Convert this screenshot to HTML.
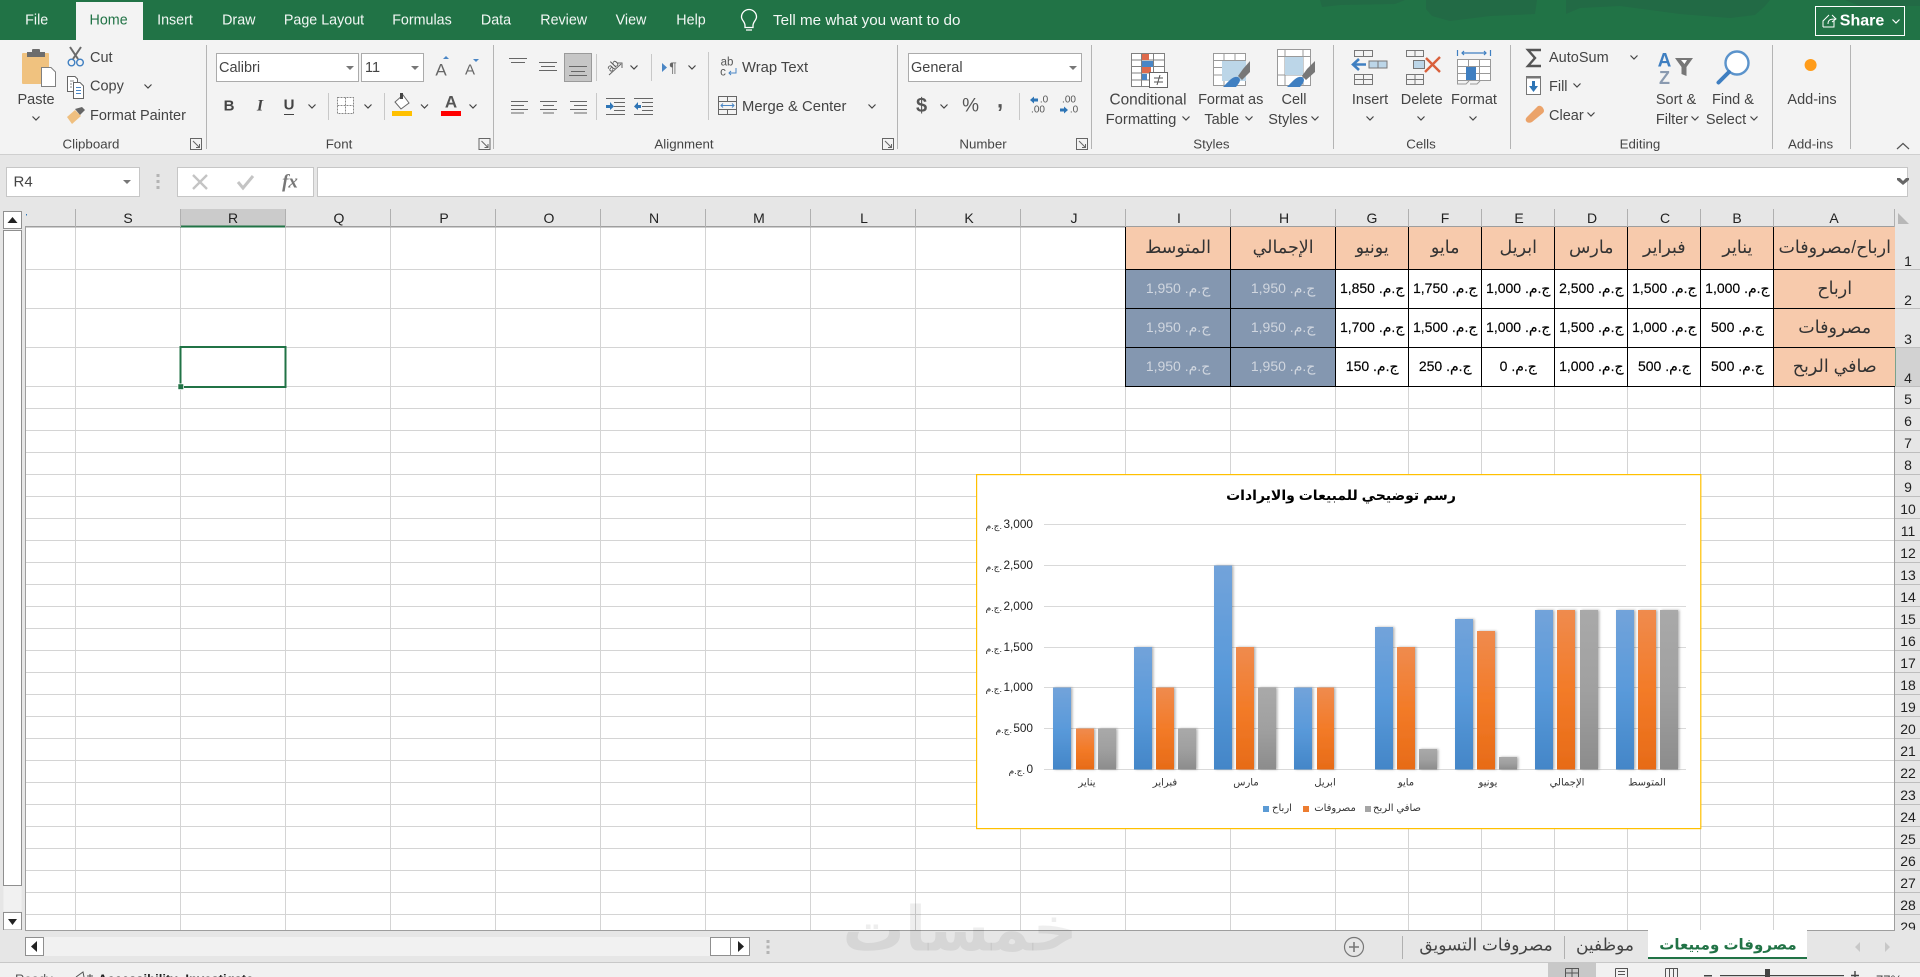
<!DOCTYPE html>
<html lang="en"><head><meta charset="utf-8"><title>Excel</title>
<style>
html,body{margin:0;padding:0;width:1920px;height:977px;overflow:hidden;background:#fff}
svg{position:absolute;left:0;top:0;display:block}
text{font-family:"Liberation Sans","DejaVu Sans",sans-serif;dominant-baseline:central;fill:#444;font-size:14.5px}
.m{text-anchor:middle}
.w text{fill:#f2f7f4;font-size:14.3px}
.c text{fill:#222;font-size:14px;text-anchor:middle}
.g text{fill:#444;font-size:13.3px;text-anchor:middle}
.ln{fill:none;stroke:#666;stroke-width:1}
.ch{fill:none;stroke:#444;stroke-width:1.2}
.cat text{font-size:10px;fill:#333;text-anchor:middle}
table{position:absolute;left:1125px;top:227px;border-collapse:collapse;table-layout:fixed;width:770px;font-family:"Liberation Sans","DejaVu Sans",sans-serif}
td{border:1px solid #000;padding:0;text-align:center;white-space:nowrap;overflow:hidden;font-size:14px;color:#000;background:#fff;vertical-align:middle;-webkit-text-stroke:.15px #000}
tr.h td,td.a{background:#f7caac;font-size:17.5px;color:#333;-webkit-text-stroke:0}
tr.h td{border-top:0}
td:last-child{border-right:0}
td.b{background:#8497b0;color:#d0d6df;-webkit-text-stroke:0}
</style></head><body>
<svg width="1920" height="977" viewBox="0 0 1920 977" xmlns="http://www.w3.org/2000/svg" shape-rendering="geometricPrecision">
<defs>
<path id="chv" class="ch" d="M-3.5-1.5 0 2 3.5-1.5"/>
<path id="tri" fill="#777" d="M-4-2H4L0 2Z"/>
<path id="launch" fill="none" stroke="#666" d="M-5.5-5.5H5.5V5.5H-5.5ZM-3-3 3.5 3.5M3.5 0V3.5H0"/>
</defs>
<!-- backgrounds -->
<rect width="1920" height="977" fill="#fff"/>
<rect width="1920" height="40" fill="#217346"/>
<path fill="#226a45" d="M1320 0H1405L1395 4 1340 5 1322 7ZM1426 0H1537L1535 14 1490 16 1450 21 1432 16 1426 9ZM1566 14 1580 8 1620 6 1680 14 1730 18 1755 15 1765 6 1770 0H1568L1566 0ZM1845 0H1920V6H1860Z"/>
<rect x="76" y="2" width="67" height="38" fill="#f3f3f3"/>
<rect y="40" width="1920" height="114" fill="#f3f3f3"/>
<rect y="154" width="1920" height="1" fill="#cfcfcf"/>
<rect y="155" width="1920" height="72" fill="#e6e6e6"/>
<!-- title tabs -->
<g class="w">
<text x="36.7" y="20.5" class="m">File</text>
<text x="108.6" y="20.5" class="m" style="fill:#217346">Home</text>
<text x="175" y="20.5" class="m">Insert</text>
<text x="238.8" y="20.5" class="m">Draw</text>
<text x="324" y="20.5" class="m">Page Layout</text>
<text x="422" y="20.5" class="m">Formulas</text>
<text x="496" y="20.5" class="m">Data</text>
<text x="563.7" y="20.5" class="m">Review</text>
<text x="631" y="20.5" class="m">View</text>
<text x="691" y="20.5" class="m">Help</text>
<text x="773" y="20.5" style="font-size:15.2px">Tell me what you want to do</text>
</g>
<path fill="none" stroke="#fff" stroke-width="1.3" d="M745 27.5V25.5C745 22 741.5 20 741.5 17A7.5 7.5 0 0 1 756.5 17C756.5 20 753 22 753 25.5V27.5ZM746 30H752"/>
<rect x="1815.5" y="6.5" width="89" height="29" fill="none" stroke="#fff"/>
<text x="1862" y="21" class="m" style="fill:#fff;font-weight:bold;font-size:16px">Share</text>
<path fill="none" stroke="#fff" d="M1823 27V21L1829 15M1823 27H1834V21M1828 24C1828 20 1830 19 1835 19M1832 15L1836 19 1832 22"/>
<path fill="none" stroke="#fff" stroke-width="1.2" d="M1892.5 19.5 1896 23 1899.5 19.5"/>
<!-- group separators -->
<g fill="#b4b4b4">
<rect x="206" y="45" width="1" height="104"/><rect x="493" y="45" width="1" height="104"/><rect x="897" y="45" width="1" height="104"/><rect x="1091" y="45" width="1" height="104"/><rect x="1333" y="45" width="1" height="104"/><rect x="1510" y="45" width="1" height="104"/><rect x="1772" y="45" width="1" height="104"/><rect x="1850" y="45" width="1" height="104"/>
<rect x="328" y="93" width="1" height="27" fill="#c8c8c8"/><rect x="384" y="93" width="1" height="27" fill="#c8c8c8"/>
<rect x="596" y="54" width="1" height="27" fill="#c8c8c8"/><rect x="596" y="93" width="1" height="27" fill="#c8c8c8"/>
<rect x="651" y="54" width="1" height="27" fill="#c8c8c8"/><rect x="708" y="52" width="1" height="68" fill="#c8c8c8"/>
<rect x="1019" y="93" width="1" height="27" fill="#c8c8c8"/>
</g>
<g class="g">
<text x="91" y="144">Clipboard</text><text x="339" y="144">Font</text><text x="684" y="144">Alignment</text><text x="983" y="144">Number</text><text x="1211.4" y="144">Styles</text><text x="1421" y="144">Cells</text><text x="1640" y="144">Editing</text><text x="1810.6" y="144">Add-ins</text>
</g>
<use href="#launch" x="196" y="144"/><use href="#launch" x="484.5" y="144"/><use href="#launch" x="888" y="144"/><use href="#launch" x="1082" y="144"/>
<path fill="none" stroke="#555" stroke-width="1.2" d="M1897 149 1903 143.5 1909 149"/>
<!-- clipboard -->
<rect x="22" y="53" width="27" height="31" rx="1" fill="#f0c27f"/>
<path fill="#6d6d6d" d="M27 52H32V50Q32 49 33 49H39Q40 49 40 50V52H45V57H27Z"/>
<path fill="#fff" stroke="#808080" d="M41.5 67.5H51L55.5 72V86.5H41.5Z"/>
<text x="36" y="100" class="m">Paste</text><use href="#chv" x="36" y="118"/>
<g fill="none"><circle cx="71.5" cy="62.5" r="3.3" stroke="#3f7fc1" stroke-width="1.4"/><circle cx="80" cy="62.5" r="3.3" stroke="#3f7fc1" stroke-width="1.4"/><path stroke="#6a6a6a" stroke-width="2" d="M73 59 81 47M78 59 70 47"/></g>
<text x="90" y="58">Cut</text>
<path fill="#fff" stroke="#666" d="M67.5 76.5H75L77.5 79V91.5H67.5Z"/><path fill="#fff" stroke="#666" d="M73.5 82.5H80L83.5 86V98.5H73.5Z"/>
<path stroke="#4a86c5" d="M76 87.5H81M76 90.5H81M76 93.5H81"/><path stroke="#888" d="M70 81H74M70 84H72M70 87H72"/>
<text x="90" y="86.7">Copy</text><use href="#chv" x="148" y="86"/>
<path fill="#efbf7f" d="M67 117 75 110 81 116 72 124Z"/><path fill="#666" d="M75 109 82 107 85 110 80 115Z"/>
<text x="90" y="116">Format Painter</text>
<!-- font -->
<rect x="216.5" y="53.5" width="142" height="28" fill="#fff" stroke="#ababab"/>
<rect x="361.5" y="53.5" width="62" height="28" fill="#fff" stroke="#ababab"/>
<text x="219" y="68">Calibri</text><text x="365" y="68">11</text>
<use href="#tri" x="350" y="68"/><use href="#tri" x="415" y="68"/>
<text x="441" y="70" class="m" style="font-size:17px;fill:#666">A</text><path fill="#4a86c5" d="M443 59H449L446 56Z"/>
<text x="470" y="70" class="m" style="font-size:15px;fill:#666">A</text><path fill="#4a86c5" d="M473 59H479L476 62Z"/>
<text x="229" y="106" class="m" style="font-weight:bold;font-size:15px;fill:#444">B</text>
<text x="260" y="106" class="m" style="font-style:italic;font-family:'Liberation Serif',serif;font-weight:bold;font-size:16px;fill:#444">I</text>
<text x="289" y="105" class="m" style="font-weight:bold;font-size:15px;fill:#444">U</text><rect x="284" y="114" width="10" height="1" fill="#444"/>
<use href="#chv" x="312" y="106"/>
<path fill="#fff" stroke="#888" stroke-dasharray="2 1" d="M337.5 97.5H353.5V113.5H337.5ZM345.5 97.5V113.5M337.5 105.5H353.5"/>
<use href="#chv" x="368" y="106"/>
<path fill="#fff" stroke="#666" d="M403 95 409 103 401 109 395 102Z"/><path fill="#444" d="M400 93H403V99H400Z"/><rect x="392" y="111" width="20" height="5" fill="#ffc000"/>
<use href="#chv" x="424.5" y="106"/>
<text x="451" y="102" class="m" style="font-size:17px;font-weight:bold;fill:#555">A</text><rect x="441" y="111" width="20" height="5" fill="#f00"/>
<use href="#chv" x="473" y="106"/>
<!-- alignment -->
<rect x="564.5" y="53.5" width="27" height="28" fill="#c6c6c6" stroke="#9a9a9a"/>
<path class="ln" d="M509 58.5H527M511 62.5H525M539 62.5H557M541 66.5H555M539 70.5H557M569 66.5H587M571 71.5H585M569 75.5H587"/>
<path class="ln" d="M511 101.5H528M511 105.5H524M511 109.5H528M511 113H524M540 101.5H557M543 105.5H554M540 109.5H557M543 113H554M570 101.5H587M574 105.5H587M570 109.5H587M574 113H587"/>
<text x="613" y="66" class="m" transform="rotate(-45 613 66)" style="font-size:11px;fill:#555">ab</text><path fill="none" stroke="#666" d="M609 75 621 64M617 63H622V68"/>
<use href="#chv" x="634" y="67"/>
<path fill="#4a86c5" d="M662 63V72L667 67.5Z"/><text x="673" y="67" class="m" style="font-size:14px;fill:#666">¶</text><use href="#chv" x="692" y="67"/>
<text x="727" y="62.5" class="m" style="font-size:11.5px;fill:#555">ab</text><text x="723" y="72.5" class="m" style="font-size:11.5px;fill:#555">c</text><path fill="none" stroke="#4a86c5" d="M736 68V73H729M731 71 729 73 731 75"/>
<text x="742" y="68" style="font-size:14.8px">Wrap Text</text>
<path class="ln" d="M718.5 96.5H736.5V114.5H718.5ZM718.5 101.5H736.5M718.5 109.5H736.5M727.5 96.5V101.5M727.5 109.5V114.5"/><path fill="none" stroke="#4a86c5" d="M721 105.5H734M723 103.5 721 105.5 723 107.5M732 103.5 734 105.5 732 107.5"/>
<text x="742" y="107" style="font-size:14.8px">Merge &amp; Center</text><use href="#chv" x="872" y="106"/>
<path class="ln" d="M606 98.5H625M614 102.5H625M614 106.5H625M614 110.5H625M606 114.5H625"/><path fill="#2e75b6" d="M606 105H610V102L614 106.5 610 110V108H606Z"/>
<path class="ln" d="M634 98.5H653M642 102.5H653M642 106.5H653M642 110.5H653M634 114.5H653"/><path fill="#2e75b6" d="M641 105H638V102L634 106.5 638 110V108H641Z"/>
<!-- number -->
<rect x="908.5" y="53.5" width="173" height="28" fill="#fff" stroke="#ababab"/>
<text x="911" y="68">General</text><use href="#tri" x="1073" y="68"/>
<text x="921.6" y="106" class="m" style="font-size:20px;font-weight:bold;fill:#555">$</text><use href="#chv" x="944" y="106"/>
<text x="970.6" y="106" class="m" style="font-size:19px;fill:#555">%</text>
<text x="1000" y="100" class="m" style="font-size:22px;font-weight:bold;fill:#555">,</text>
<text x="1044" y="100" class="m" style="font-size:10px;fill:#555">.0</text><text x="1038" y="110" class="m" style="font-size:10px;fill:#555">.00</text><path fill="#2e75b6" d="M1030 100 1034 96.5V98.5H1038V101.5H1034V103.5Z"/>
<text x="1069" y="100" class="m" style="font-size:10px;fill:#555">.00</text><text x="1074" y="110" class="m" style="font-size:10px;fill:#555">.0</text><path fill="#2e75b6" d="M1060 108.5H1064V106.5L1068 110 1064 113.5V111.5H1060Z"/>
<!-- styles -->
<path fill="#fff" stroke="#808080" d="M1131.5 53.5H1164.5V86.5H1131.5ZM1131.5 60H1164.5M1131.5 66.5H1164.5M1131.5 73H1164.5M1131.5 80H1164.5M1141.5 53.5V86.5M1153.5 53.5V86.5"/>
<rect x="1142" y="54" width="7" height="6" fill="#de6a4b"/><rect x="1142" y="61" width="11" height="6" fill="#4a86c5"/><rect x="1142" y="67" width="9" height="6" fill="#de6a4b"/><rect x="1142" y="74" width="5" height="6" fill="#4a86c5"/>
<rect x="1149.5" y="72.5" width="18" height="15" fill="#fff" stroke="#666"/><path stroke="#555" fill="none" d="M1154 78H1163M1154 82H1163M1157 85 1160 75"/>
<g fill="#fff" stroke="#999"><path d="M1213.5 53.5H1245.5V85.5H1213.5Z"/><path fill="none" d="M1213.5 60.5H1245.5M1213.5 67.5H1245.5M1213.5 75H1245.5M1224 53.5V85.5M1235 53.5V85.5"/></g>
<rect x="1222" y="61" width="24" height="20" fill="#bcd6e8"/>
<path fill="#777" d="M1243 69 1250 61V72L1242 80 1238 76Z"/><path fill="#3f7fc1" d="M1223 87C1227 83 1231 78 1235 77 1240 76 1241 80 1239 83L1236 87Z"/>
<g fill="#fff" stroke="#999"><path d="M1277.5 49.5H1310.5V85.5H1277.5Z"/><path fill="none" d="M1277.5 56.5H1310.5M1277.5 75H1310.5M1285 49.5V85.5M1303 49.5V85.5"/></g>
<rect x="1285" y="57" width="18" height="18" fill="#bcd6e8"/>
<path fill="#777" d="M1307 69 1315 61V72L1306 80 1302 76Z"/><path fill="#3f7fc1" d="M1287 87C1291 83 1295 78 1299 77 1304 76 1305 80 1303 83L1300 87Z"/>
<text x="1148" y="100" class="m" style="font-size:15.4px">Conditional</text><text x="1141" y="120" class="m" style="font-size:14.8px">Formatting</text><use href="#chv" x="1186" y="118"/>
<text x="1230.7" y="100" class="m">Format as</text><text x="1221.7" y="120" class="m">Table</text><use href="#chv" x="1249" y="118"/>
<text x="1294" y="100" class="m">Cell</text><text x="1288" y="120" class="m">Styles</text><use href="#chv" x="1315" y="118"/>
<!-- cells -->
<path class="ln" style="stroke:#777" d="M1354.5 50.5H1372.5V56.5H1354.5ZM1363.5 50.5V56.5M1354.5 74.5H1372.5V84.5H1354.5ZM1354.5 79.5H1372.5M1363.5 74.5V84.5"/>
<rect x="1369" y="61" width="18" height="7" fill="#bcd6e8" stroke="#777"/><path stroke="#777" d="M1378 61V68"/>
<path fill="none" stroke="#3f7fc1" stroke-width="2.6" d="M1366 64.5H1353M1359 59 1353 64.5 1359 70"/>
<text x="1370" y="100" class="m">Insert</text><use href="#chv" x="1370" y="118"/>
<path class="ln" style="stroke:#777" d="M1406.5 50.5H1423.5V56.5H1406.5ZM1415 50.5V56.5M1406.5 74.5H1423.5V84.5H1406.5ZM1406.5 79.5H1423.5M1415 74.5V84.5"/>
<rect x="1413.5" y="60.5" width="11" height="8" fill="#bcd6e8" stroke="#777"/>
<path stroke="#d9603c" stroke-width="2.4" fill="none" d="M1426 58 1440 72M1440 57 1425 72"/>
<text x="1421.7" y="100" class="m">Delete</text><use href="#chv" x="1421" y="118"/>
<path fill="none" stroke="#3f7fc1" stroke-width="1.2" d="M1457.5 50V56M1490.5 50V56M1462 53H1486M1464 51 1462 53 1464 55M1484 51 1486 53 1484 55"/>
<path fill="#fff" stroke="#999" d="M1457.5 59.5H1490.5V80.5H1457.5ZM1457.5 66.5H1490.5M1457.5 73.5H1490.5M1468.5 59.5V80.5M1479.5 59.5V80.5"/>
<rect x="1466" y="67" width="10" height="13" fill="#3f7fc1"/>
<path fill="none" stroke="#999" d="M1457.5 80.5V84H1466L1469 81M1470 84H1477L1480 81"/>
<text x="1474" y="100" class="m">Format</text><use href="#chv" x="1473" y="118"/>
<!-- editing -->
<path fill="none" stroke="#555" stroke-width="2.4" d="M1541 50H1528L1535 58 1528 66H1541"/>
<text x="1549" y="58">AutoSum</text><use href="#chv" x="1634" y="57"/>
<rect x="1526.5" y="77.5" width="14" height="17" fill="#fff" stroke="#777"/><rect x="1526" y="76" width="15" height="2.5" fill="#777"/>
<path fill="#2e75b6" d="M1532 81H1535V86H1538L1533.5 92 1529 86H1532Z"/>
<text x="1549" y="87">Fill</text><use href="#chv" x="1577" y="85"/>
<path fill="#eba36a" d="M1527 117 1538 106Q1541 105 1543 108 1545 111 1543 113L1532 122Q1528 124 1526 121 1525 119 1527 117Z"/>
<text x="1549" y="116">Clear</text><use href="#chv" x="1591" y="114"/>
<text x="1664.5" y="61" class="m" style="font-size:19px;font-weight:bold;fill:#3f7fc1">A</text><text x="1664.5" y="78" class="m" style="font-size:18px;font-weight:bold;fill:#8a9ab0">Z</text>
<path fill="#777" d="M1675 58H1693L1686.5 67V76L1681.5 74V67Z"/><path fill="#fff" d="M1681 60H1687L1684.5 64Z"/>
<text x="1676" y="100" class="m">Sort &amp;</text><text x="1672" y="120" class="m">Filter</text><use href="#chv" x="1695" y="118"/>
<circle cx="1737" cy="63" r="11.5" fill="#fff" stroke="#5b93cb" stroke-width="2.4"/><path stroke="#3f7fc1" stroke-width="4" stroke-linecap="round" d="M1729 72 1718.5 82.5"/>
<text x="1733" y="100" class="m">Find &amp;</text><text x="1726" y="120" class="m">Select</text><use href="#chv" x="1754" y="118"/>
<circle cx="1810.6" cy="65" r="6" fill="#ff9c1a"/>
<text x="1812" y="100" class="m">Add-ins</text>
<!-- formula bar -->
<rect x="6.5" y="167.5" width="133" height="29" fill="#fff" stroke="#c6c6c6"/>
<text x="13.5" y="182" style="font-size:15px">R4</text><use href="#tri" x="127" y="182"/>
<g fill="#b4b4b4"><rect x="156.5" y="174" width="3" height="3"/><rect x="156.5" y="180" width="3" height="3"/><rect x="156.5" y="186" width="3" height="3"/></g>
<rect x="177.5" y="167.5" width="136" height="29" fill="#fff" stroke="#c6c6c6"/>
<path fill="none" stroke="#c4c4c4" stroke-width="2.4" d="M193 175 207 189M207 175 193 189"/>
<path fill="none" stroke="#c4c4c4" stroke-width="3" d="M238 182 243 188 253 176"/>
<text x="290" y="182" class="m" style="font-family:'Liberation Serif',serif;font-style:italic;font-weight:bold;font-size:19px;fill:#777">fx</text>
<rect x="317.5" y="167.5" width="1590" height="29" fill="#fff" stroke="#c6c6c6"/>
<path fill="#666" d="M1897 178H1900L1903 181 1906 178H1909V180L1903 185 1897 180Z"/>
<!-- grid -->
<rect x="25" y="227" width="1870" height="703" fill="#fff"/>
<g fill="#d4d4d4" shape-rendering="crispEdges">
<rect x="75" y="227" width="1" height="703"/><rect x="180" y="227" width="1" height="703"/><rect x="285" y="227" width="1" height="703"/><rect x="390" y="227" width="1" height="703"/><rect x="495" y="227" width="1" height="703"/><rect x="600" y="227" width="1" height="703"/><rect x="705" y="227" width="1" height="703"/><rect x="810" y="227" width="1" height="703"/><rect x="915" y="227" width="1" height="703"/><rect x="1020" y="227" width="1" height="703"/><rect x="1125" y="227" width="1" height="703"/><rect x="1230" y="227" width="1" height="703"/><rect x="1335" y="227" width="1" height="703"/><rect x="1408" y="227" width="1" height="703"/><rect x="1481" y="227" width="1" height="703"/><rect x="1554" y="227" width="1" height="703"/><rect x="1627" y="227" width="1" height="703"/><rect x="1700" y="227" width="1" height="703"/><rect x="1773" y="227" width="1" height="703"/>
<rect x="25" y="269" width="1870" height="1"/><rect x="25" y="308" width="1870" height="1"/><rect x="25" y="347" width="1870" height="1"/><rect x="25" y="386" width="1870" height="1"/><rect x="25" y="408" width="1870" height="1"/><rect x="25" y="430" width="1870" height="1"/><rect x="25" y="452" width="1870" height="1"/><rect x="25" y="474" width="1870" height="1"/><rect x="25" y="496" width="1870" height="1"/><rect x="25" y="518" width="1870" height="1"/><rect x="25" y="540" width="1870" height="1"/><rect x="25" y="562" width="1870" height="1"/><rect x="25" y="584" width="1870" height="1"/><rect x="25" y="606" width="1870" height="1"/><rect x="25" y="628" width="1870" height="1"/><rect x="25" y="650" width="1870" height="1"/><rect x="25" y="672" width="1870" height="1"/><rect x="25" y="694" width="1870" height="1"/><rect x="25" y="716" width="1870" height="1"/><rect x="25" y="738" width="1870" height="1"/><rect x="25" y="760" width="1870" height="1"/><rect x="25" y="782" width="1870" height="1"/><rect x="25" y="804" width="1870" height="1"/><rect x="25" y="826" width="1870" height="1"/><rect x="25" y="848" width="1870" height="1"/><rect x="25" y="870" width="1870" height="1"/><rect x="25" y="892" width="1870" height="1"/><rect x="25" y="914" width="1870" height="1"/>
</g>
<rect x="25" y="227" width="1" height="703" fill="#9e9e9e"/>
<!-- column headers -->
<rect x="25" y="226" width="1870" height="1.5" fill="#9e9e9e"/>
<rect x="180" y="209" width="105" height="18" fill="#cbcbcb"/><rect x="180" y="225.5" width="105" height="2" fill="#217346"/>
<g fill="#b0b0b0" shape-rendering="crispEdges"><rect x="75" y="209" width="1" height="18"/><rect x="180" y="209" width="1" height="18"/><rect x="285" y="209" width="1" height="18"/><rect x="390" y="209" width="1" height="18"/><rect x="495" y="209" width="1" height="18"/><rect x="600" y="209" width="1" height="18"/><rect x="705" y="209" width="1" height="18"/><rect x="810" y="209" width="1" height="18"/><rect x="915" y="209" width="1" height="18"/><rect x="1020" y="209" width="1" height="18"/><rect x="1125" y="209" width="1" height="18"/><rect x="1230" y="209" width="1" height="18"/><rect x="1335" y="209" width="1" height="18"/><rect x="1408" y="209" width="1" height="18"/><rect x="1481" y="209" width="1" height="18"/><rect x="1554" y="209" width="1" height="18"/><rect x="1627" y="209" width="1" height="18"/><rect x="1700" y="209" width="1" height="18"/><rect x="1773" y="209" width="1" height="18"/><rect x="1894" y="209" width="1" height="18"/></g>
<g class="c">
<text x="128" y="218">S</text><text x="233" y="218">R</text><text x="339" y="218">Q</text><text x="444" y="218">P</text><text x="549" y="218">O</text><text x="654" y="218">N</text><text x="759" y="218">M</text><text x="864" y="218">L</text><text x="969" y="218">K</text><text x="1074" y="218">J</text><text x="1179" y="218">I</text><text x="1284" y="218">H</text><text x="1372" y="218">G</text><text x="1445" y="218">F</text><text x="1519" y="218">E</text><text x="1592" y="218">D</text><text x="1665" y="218">C</text><text x="1737" y="218">B</text><text x="1834" y="218">A</text>
</g>
<rect x="26" y="214" width="1" height="1.5" fill="#2e75b6"/>
<path fill="#b8b8b8" d="M1898 213 1909 224H1898Z"/>
<!-- row headers -->
<rect x="1894" y="227" width="26" height="703" fill="#e6e6e6"/>
<rect x="1894" y="347" width="26" height="39" fill="#d2d2d2"/>
<rect x="1894" y="227" width="1" height="703" fill="#9e9e9e"/>
<rect x="1894" y="347" width="1.5" height="40" fill="#217346"/>
<g fill="#bdbdbd" shape-rendering="crispEdges"><rect x="1895" y="269" width="25" height="1"/><rect x="1895" y="308" width="25" height="1"/><rect x="1895" y="347" width="25" height="1"/><rect x="1895" y="386" width="25" height="1"/><rect x="1895" y="408" width="25" height="1"/><rect x="1895" y="430" width="25" height="1"/><rect x="1895" y="452" width="25" height="1"/><rect x="1895" y="474" width="25" height="1"/><rect x="1895" y="496" width="25" height="1"/><rect x="1895" y="518" width="25" height="1"/><rect x="1895" y="540" width="25" height="1"/><rect x="1895" y="562" width="25" height="1"/><rect x="1895" y="584" width="25" height="1"/><rect x="1895" y="606" width="25" height="1"/><rect x="1895" y="628" width="25" height="1"/><rect x="1895" y="650" width="25" height="1"/><rect x="1895" y="672" width="25" height="1"/><rect x="1895" y="694" width="25" height="1"/><rect x="1895" y="716" width="25" height="1"/><rect x="1895" y="738" width="25" height="1"/><rect x="1895" y="760" width="25" height="1"/><rect x="1895" y="782" width="25" height="1"/><rect x="1895" y="804" width="25" height="1"/><rect x="1895" y="826" width="25" height="1"/><rect x="1895" y="848" width="25" height="1"/><rect x="1895" y="870" width="25" height="1"/><rect x="1895" y="892" width="25" height="1"/><rect x="1895" y="914" width="25" height="1"/></g>
<g class="c">
<text x="1908" y="261">1</text><text x="1908" y="300">2</text><text x="1908" y="339">3</text><text x="1908" y="378">4</text>
<text x="1908" y="399">5</text><text x="1908" y="421">6</text><text x="1908" y="443">7</text><text x="1908" y="465">8</text><text x="1908" y="487">9</text><text x="1908" y="509">10</text><text x="1908" y="531">11</text><text x="1908" y="553">12</text><text x="1908" y="575">13</text><text x="1908" y="597">14</text><text x="1908" y="619">15</text><text x="1908" y="641">16</text><text x="1908" y="663">17</text><text x="1908" y="685">18</text><text x="1908" y="707">19</text><text x="1908" y="729">20</text><text x="1908" y="751">21</text><text x="1908" y="773">22</text><text x="1908" y="795">23</text><text x="1908" y="817">24</text><text x="1908" y="839">25</text><text x="1908" y="861">26</text><text x="1908" y="883">27</text><text x="1908" y="905">28</text><text x="1908" y="927">29</text>
</g>
<!-- selection -->
<rect x="180.5" y="347" width="105" height="40" fill="none" stroke="#217346" stroke-width="2"/>
<rect x="177.5" y="383.5" width="6.5" height="6.5" fill="#fff"/><rect x="178.3" y="384.2" width="5" height="5" fill="#217346"/>
<!-- vertical scrollbar -->
<rect x="0" y="209" width="25" height="721" fill="#e6e6e6"/>
<rect x="3.5" y="229.5" width="18" height="682" fill="#f1f1f1"/>
<rect x="3.5" y="230.5" width="18" height="655" fill="#fff" stroke="#8f8f8f"/>
<rect x="3.5" y="211.5" width="18" height="17" fill="#fff" stroke="#8f8f8f"/><path fill="#222" d="M7.5 223H17.5L12.5 217Z"/>
<rect x="3.5" y="912.5" width="18" height="17.5" fill="#fff" stroke="#8f8f8f"/><path fill="#222" d="M8 919H17L12.5 925Z"/>
<!-- chart -->
<rect x="976.6" y="474.6" width="724.2" height="354" fill="#fff" stroke="#ffc000" stroke-width="1.2"/>
<text x="1341" y="495" class="m" style="font-weight:bold;font-size:14px;fill:#000">رسم توضيحي للمبيعات والايرادات</text>
<g fill="#d9d9d9" shape-rendering="crispEdges"><rect x="1044" y="524" width="642" height="1"/><rect x="1044" y="565" width="642" height="1"/><rect x="1044" y="606" width="642" height="1"/><rect x="1044" y="647" width="642" height="1"/><rect x="1044" y="687" width="642" height="1"/><rect x="1044" y="728" width="642" height="1"/><rect x="1044" y="769" width="642" height="1"/></g>
<g>
<text x="1033" y="524" text-anchor="end" style="font-size:11.8px;fill:#222">3,000</text><text x="1002" y="526" text-anchor="end" style="font-size:9px;fill:#222">ج.م.</text>
<text x="1033" y="565" text-anchor="end" style="font-size:11.8px;fill:#222">2,500</text><text x="1002" y="567" text-anchor="end" style="font-size:9px;fill:#222">ج.م.</text>
<text x="1033" y="606" text-anchor="end" style="font-size:11.8px;fill:#222">2,000</text><text x="1002" y="608" text-anchor="end" style="font-size:9px;fill:#222">ج.م.</text>
<text x="1033" y="647" text-anchor="end" style="font-size:11.8px;fill:#222">1,500</text><text x="1002" y="649" text-anchor="end" style="font-size:9px;fill:#222">ج.م.</text>
<text x="1033" y="687" text-anchor="end" style="font-size:11.8px;fill:#222">1,000</text><text x="1002" y="689" text-anchor="end" style="font-size:9px;fill:#222">ج.م.</text>
<text x="1033" y="728" text-anchor="end" style="font-size:11.8px;fill:#222">500</text><text x="1012" y="730" text-anchor="end" style="font-size:9px;fill:#222">ج.م.</text>
<text x="1033" y="769" text-anchor="end" style="font-size:11.8px;fill:#222">0</text><text x="1025" y="771" text-anchor="end" style="font-size:9px;fill:#222">ج.م.</text>
</g>
<defs>
<linearGradient id="gb" x1="0" y1="0" x2="0" y2="1"><stop offset="0" stop-color="#72a3da"/><stop offset=".5" stop-color="#5a9ada"/><stop offset="1" stop-color="#4386c8"/></linearGradient>
<linearGradient id="go" x1="0" y1="0" x2="0" y2="1"><stop offset="0" stop-color="#ef8b4e"/><stop offset=".5" stop-color="#f37b28"/><stop offset="1" stop-color="#e76b17"/></linearGradient>
<linearGradient id="gg" x1="0" y1="0" x2="0" y2="1"><stop offset="0" stop-color="#a9a9a9"/><stop offset=".5" stop-color="#a0a0a0"/><stop offset="1" stop-color="#8c8c8c"/></linearGradient>
<filter id="sh" x="-30%" y="-5%" width="170%" height="110%"><feDropShadow dx="1.5" dy="0" stdDeviation="1.2" flood-color="#000" flood-opacity=".3"/></filter>
</defs>
<g filter="url(#sh)" shape-rendering="crispEdges">
<g fill="url(#gb)">
<rect x="1053" y="687.5" width="18" height="82"/><rect x="1134" y="647" width="18" height="122.5"/><rect x="1214" y="565.5" width="18" height="204"/><rect x="1294" y="687.5" width="18" height="82"/><rect x="1375" y="627" width="18" height="142.5"/><rect x="1455" y="619" width="18" height="150.5"/><rect x="1535" y="610" width="18" height="159.5"/><rect x="1616" y="610" width="18" height="159.5"/>
</g>
<g fill="url(#go)">
<rect x="1076" y="728.5" width="18" height="41"/><rect x="1156" y="687.5" width="18" height="82"/><rect x="1236" y="647" width="18" height="122.5"/><rect x="1317" y="687.5" width="17" height="82"/><rect x="1397" y="647" width="18" height="122.5"/><rect x="1477" y="631" width="18" height="138.5"/><rect x="1557" y="610" width="18" height="159.5"/><rect x="1638" y="610" width="18" height="159.5"/>
</g>
<g fill="url(#gg)">
<rect x="1098" y="728.5" width="18" height="41"/><rect x="1178" y="728.5" width="18" height="41"/><rect x="1258" y="687.5" width="18" height="82"/><rect x="1419" y="749" width="18" height="20.5"/><rect x="1499" y="757" width="18" height="12.5"/><rect x="1580" y="610" width="18" height="159.5"/><rect x="1660" y="610" width="18" height="159.5"/>
</g>
</g>
<g class="cat">
<text x="1087" y="783">يناير</text><text x="1165" y="783">فبراير</text><text x="1246" y="783">مارس</text><text x="1325" y="783">ابريل</text><text x="1406" y="783">مايو</text><text x="1488" y="783">يونيو</text><text x="1567" y="783">الإجمالي</text><text x="1647" y="783">المتوسط</text>
<text x="1282" y="808.7">ارباح</text><text x="1335" y="808.7">مصروفات</text><text x="1397" y="808.7">صافي الربح</text>
</g>
<rect x="1263" y="806" width="6" height="6" fill="#5b9bd5"/><rect x="1303" y="806" width="6" height="6" fill="#ed7d31"/><rect x="1365" y="806" width="6" height="6" fill="#a5a5a5"/>
<!-- tab bar -->
<rect y="930" width="1920" height="32" fill="#e6e6e6"/>
<rect x="25" y="930" width="1870" height="1" fill="#9e9e9e"/>
<rect x="25" y="937" width="725" height="19" fill="#f1f1f1"/>
<rect x="25.5" y="937.5" width="18" height="18" fill="#fff" stroke="#8f8f8f"/><path fill="#222" d="M37 941V952L31 946.5Z"/>
<rect x="710.5" y="937.5" width="20" height="18" fill="#fff" stroke="#8f8f8f"/>
<rect x="730.5" y="937.5" width="19" height="18" fill="#fff" stroke="#8f8f8f"/><path fill="#222" d="M738 941V952L744 946.5Z"/>
<g fill="#b4b4b4"><rect x="766.5" y="940" width="3" height="3"/><rect x="766.5" y="945.5" width="3" height="3"/><rect x="766.5" y="951" width="3" height="3"/></g>
<rect x="1648" y="930" width="159" height="27" fill="#fff"/><rect x="1648" y="957" width="159" height="2" fill="#217346"/>
<rect x="1564" y="936" width="1" height="23" fill="#b0b0b0"/><rect x="1402" y="936" width="1" height="23" fill="#b0b0b0"/>
<text x="1728" y="945" class="m" style="font-size:15px;font-weight:bold;fill:#217346">مصروفات ومبيعات</text>
<text x="1605" y="945" class="m" style="font-size:17px;fill:#444">موظفين</text>
<text x="1486" y="945" class="m" style="font-size:17px;fill:#444">مصروفات التسويق</text>
<circle cx="1354" cy="947" r="9.5" fill="none" stroke="#777" stroke-width="1.2"/><path stroke="#777" stroke-width="1.6" d="M1349 947H1359M1354 942V952"/>
<path fill="#c8c8c8" d="M1860 942V952L1855 947ZM1885 942V952L1890 947Z"/>
<!-- watermark -->
<text x="960" y="930" class="m" style="font-size:62px;font-weight:bold;fill:#000;fill-opacity:.065">خمسات</text>
<!-- status bar -->
<rect y="962" width="1920" height="1" fill="#c8c8c8"/>
<rect y="963" width="1920" height="14" fill="#f1f1f1"/>
<text x="15" y="979" style="font-size:13px;fill:#555">Ready</text>
<path fill="none" stroke="#555" d="M76 977 83 972 84 977M90 974V977M87 976H93"/>
<text x="98" y="979" style="font-size:13px;font-weight:bold;fill:#222">Accessibility: Investigate</text>
<rect x="1548" y="963" width="48" height="14" fill="#c8c8c8"/>
<path fill="none" stroke="#555" d="M1565.5 968.5H1578.5V977M1565.5 968.5V977M1565.5 973H1578.5M1572 968.5V977"/>
<path fill="none" stroke="#555" d="M1615.5 968.5H1627.5V977M1615.5 968.5V977M1618 971.5H1625M1618 974.5H1625"/>
<path fill="none" stroke="#555" d="M1665.5 968.5H1677.5V977M1665.5 968.5V977M1669.5 968.5V977M1673.5 968.5V977"/>
<rect x="1704" y="975" width="8" height="1.5" fill="#444"/>
<rect x="1720" y="975" width="124" height="1.2" fill="#444"/><rect x="1765" y="969" width="5" height="8" fill="#444"/>
<path stroke="#444" stroke-width="1.4" d="M1851 975.5H1859M1855 971V977"/>
<text x="1889" y="980" class="m" style="font-size:13px;fill:#444">77%</text>
</svg>
<table>
<colgroup><col style="width:105px"><col style="width:105px"><col style="width:73px"><col style="width:73px"><col style="width:73px"><col style="width:73px"><col style="width:73px"><col style="width:73px"><col style="width:121px"></colgroup>
<tr class="h" style="height:42px"><td>المتوسط</td><td>الإجمالي</td><td>يونيو</td><td>مايو</td><td>ابريل</td><td>مارس</td><td>فبراير</td><td>يناير</td><td>ارباح/مصروفات</td></tr>
<tr style="height:39px"><td class="b" dir="rtl">ج.م. 1,950</td><td class="b" dir="rtl">ج.م. 1,950</td><td dir="rtl">ج.م. 1,850</td><td dir="rtl">ج.م. 1,750</td><td dir="rtl">ج.م. 1,000</td><td dir="rtl">ج.م. 2,500</td><td dir="rtl">ج.م. 1,500</td><td dir="rtl">ج.م. 1,000</td><td class="a">ارباح</td></tr>
<tr style="height:39px"><td class="b" dir="rtl">ج.م. 1,950</td><td class="b" dir="rtl">ج.م. 1,950</td><td dir="rtl">ج.م. 1,700</td><td dir="rtl">ج.م. 1,500</td><td dir="rtl">ج.م. 1,000</td><td dir="rtl">ج.م. 1,500</td><td dir="rtl">ج.م. 1,000</td><td dir="rtl">ج.م. 500</td><td class="a">مصروفات</td></tr>
<tr style="height:39px"><td class="b" dir="rtl">ج.م. 1,950</td><td class="b" dir="rtl">ج.م. 1,950</td><td dir="rtl">ج.م. 150</td><td dir="rtl">ج.م. 250</td><td dir="rtl">ج.م. 0</td><td dir="rtl">ج.م. 1,000</td><td dir="rtl">ج.م. 500</td><td dir="rtl">ج.م. 500</td><td class="a">صافي الربح</td></tr>
</table>
</body></html>
